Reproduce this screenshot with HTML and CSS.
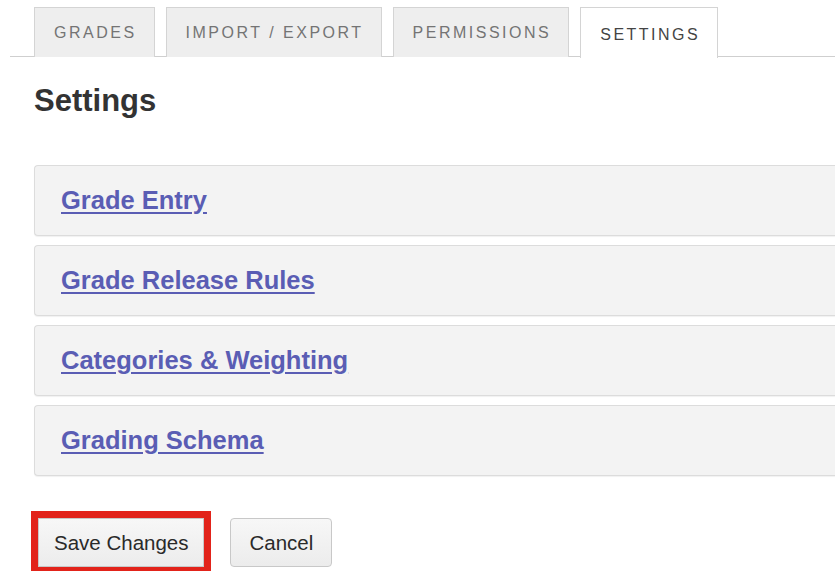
FILE: index.html
```html
<!DOCTYPE html>
<html lang="en">
<head>
<meta charset="utf-8">
<title>Gradebook Settings</title>
<link rel="stylesheet" href="styles.css">
</head>
<body>
<div class="page">
  <nav class="tabs">
    <a class="tab" href="#">GRADES</a>
    <a class="tab" href="#">IMPORT / EXPORT</a>
    <a class="tab" href="#">PERMISSIONS</a>
    <a class="tab tab-active" href="#">SETTINGS</a>
  </nav>

  <main class="content">
    <h1 class="title">Settings</h1>

    <div class="panels">
      <div class="panel"><a class="panel-link" href="#">Grade Entry</a></div>
      <div class="panel"><a class="panel-link" href="#">Grade Release Rules</a></div>
      <div class="panel"><a class="panel-link" href="#">Categories &amp; Weighting</a></div>
      <div class="panel"><a class="panel-link" href="#">Grading Schema</a></div>
    </div>

    <div class="actions">
      <button class="btn btn-highlight" type="button">Save Changes</button>
      <button class="btn" type="button">Cancel</button>
    </div>
  </main>
</div>
</body>
</html>
```

FILE: styles.css
```css
* {
  box-sizing: border-box;
}

html, body {
  margin: 0;
  padding: 0;
  background: #ffffff;
  overflow: hidden;
}

body {
  font-family: "Liberation Sans", Arial, Helvetica, sans-serif;
  color: #333333;
}

.page {
  width: 835px;
  height: 571px;
  padding-top: 7px;
}

/* tab strip */
.tabs {
  display: flex;
  gap: 11px;
  margin-left: 10px;
  padding-left: 24px;
  border-bottom: 1px solid #cfcfcf;
  height: 50px;
}

.tab {
  display: flex;
  align-items: center;
  padding: 0 17px 0 19px;
  height: 50px;
  background: #eeeeee;
  border: 1px solid #d4d4d4;
  border-bottom: none;
  color: #747474;
  font-size: 16px;
  letter-spacing: 2.5px;
  text-decoration: none;
}

.tab-active {
  background: #ffffff;
  color: #444444;
  height: 51px;
  margin-bottom: -1px;
  padding-top: 4px;
}

/* page body */
.content {
  padding-left: 34px;
}

.title {
  margin: 0;
  padding-top: 26px;
  font-size: 31px;
  line-height: 36px;
  font-weight: bold;
  color: #333333;
}

.panels {
  display: flex;
  flex-direction: column;
  gap: 9px;
  margin-top: 46px;
}

.panel {
  display: flex;
  align-items: center;
  height: 71px;
  padding-left: 26px;
  background: #f3f3f3;
  border: 1px solid #dcdcdc;
  border-right: none;
  border-radius: 4px 0 0 4px;
  box-shadow: 0 1px 1px rgba(0, 0, 0, 0.06);
}

.panel-link {
  color: #5a5db4;
  font-size: 25.5px;
  font-weight: bold;
  text-decoration: underline;
  text-underline-offset: 3px;
}

/* buttons */
.actions {
  display: flex;
  gap: 26px;
  margin-top: 42px;
  padding-left: 4px;
}

.btn {
  height: 49px;
  padding: 0 15px;
  font-family: "Liberation Sans", Arial, Helvetica, sans-serif;
  font-size: 20.5px;
  color: #2a2a2a;
  background: linear-gradient(#f7f7f7, #ececec);
  border: 1px solid #c8c8c8;
  border-radius: 4px;
}

.btn + .btn {
  padding: 0 18px;
}

.btn-highlight {
  border-radius: 0;
  outline: 7px solid #e2231a;
  outline-offset: 0;
}
```
